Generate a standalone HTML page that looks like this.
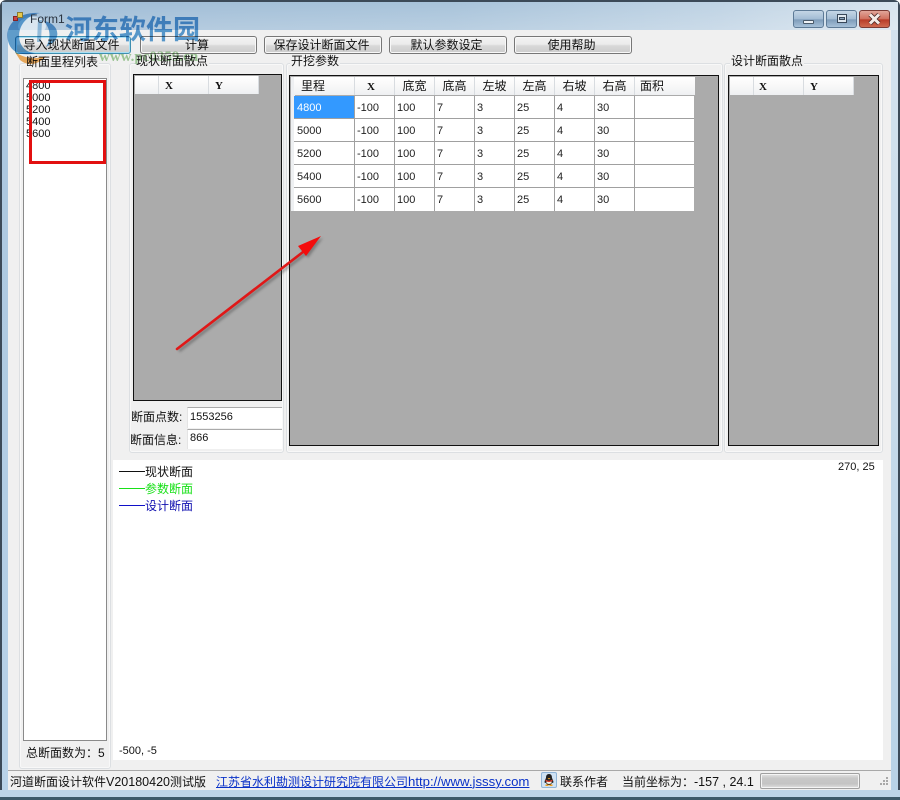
<!DOCTYPE html>
<html>
<head>
<meta charset="utf-8">
<style>
html,body{margin:0;padding:0;width:900px;height:800px;overflow:hidden;background:#fff}
*{box-sizing:border-box}
body{position:relative;font-family:"Liberation Sans","WenQuanYi Zen Hei","Noto Sans CJK SC",sans-serif;font-size:12px;color:#111}
.a{position:absolute}
.t{position:absolute;white-space:nowrap;line-height:14px}
.btn{position:absolute;top:36px;height:18px;border:1px solid #777;border-radius:3px;background:linear-gradient(#f3f3f3 0,#ebebeb 45%,#d8d8d8 55%,#cdcdcd 100%);text-align:center;line-height:16px;font-size:12px;box-shadow:inset 0 0 0 1px #f8f8f8;padding-right:3px}
.grp{position:absolute;border:1px solid #dcdfe2;border-radius:3px;background:#f0f0f0;box-shadow:inset 0 0 0 1px #f8f8f8}
.lbl{position:absolute;background:#f0f0f0;line-height:14px;white-space:nowrap;padding:0 1px;font-size:12px}
.grid{position:absolute;background:#ababab;border:1px solid #111}
.hc{position:absolute;top:1px;height:18px;background:linear-gradient(#fff,#f8f8f8 50%,#eef0f2);border-right:1px solid #d8dce0;text-align:center;line-height:19px;font-size:12px}
.m{font-family:"Liberation Serif",serif;font-weight:bold;font-size:11px;line-height:20px;text-align:left}
.c{position:absolute;background:#fff;border-right:1px solid #a0a0a0;border-bottom:1px solid #a0a0a0;height:23px;line-height:24px;font-size:11px;padding-left:2px;color:#222}
.wm{position:absolute;white-space:nowrap;mix-blend-mode:multiply}
</style>
</head>
<body>
<!-- window frame -->
<div class="a" style="left:0;top:0;width:900px;height:800px;border:2px solid #3c4a58;border-radius:6px 6px 0 0;background:linear-gradient(180deg,#9dbbd6 0,#b4cde2 30px,#b9d2e6 100%)"></div>
<div class="a" style="left:2px;top:2px;width:896px;height:28px;background:linear-gradient(rgba(255,255,255,0),rgba(255,255,255,.2)),linear-gradient(90deg,#9fbcd6 0,#a8c3da 50%,#bfd3e4 80%,#d8e4ee 100%)"></div>
<div class="a" style="left:8px;top:30px;width:883px;height:760px;background:#f0f0f0"></div>
<div class="a" style="left:0;top:790px;width:900px;height:10px;background:#bcd5e8;border-bottom:3px solid #3c5a6a"></div>
<div class="a" style="left:0;top:30px;width:8px;height:760px;background:linear-gradient(#aac6de,#b8d2e8);border-left:2px solid #3c4a58"></div>
<div class="a" style="left:891px;top:30px;width:9px;height:760px;background:linear-gradient(#d4e2ee,#b8d2e6);border-right:2px solid #3c4a58"></div>

<!-- watermark logo pale base -->
<svg class="a" style="left:0;top:0" width="80" height="40"><ellipse cx="32" cy="26" rx="14" ry="9" fill="#e8f0f6" opacity=".75"/></svg>

<!-- caption buttons -->
<div class="a" style="left:793px;top:10px;width:31px;height:18px;border:1px solid #5d7a96;border-radius:3px;background:linear-gradient(#c4d6e6,#a3bcd4 50%,#7e9cba 55%,#a6c0d8)"><div class="a" style="left:9px;top:9px;width:11px;height:4px;background:#eef2f6;border:1px solid #4a5a6a;border-radius:1px"></div></div>
<div class="a" style="left:826px;top:10px;width:31px;height:18px;border:1px solid #5d7a96;border-radius:3px;background:linear-gradient(#c4d6e6,#a3bcd4 50%,#7e9cba 55%,#a6c0d8)"><div class="a" style="left:10px;top:3px;width:10px;height:9px;background:#dfe8f0;border:1px solid #38485a"></div><div class="a" style="left:12px;top:6px;width:6px;height:3px;background:#8aa4bc;border:1px solid #38485a"></div></div>
<div class="a" style="left:859px;top:10px;width:31px;height:18px;border:1px solid #7a3a34;border-radius:3px;background:linear-gradient(#e2a69a,#d0705e 50%,#b83c28 55%,#cf6a50)">
<svg class="a" style="left:0;top:0" width="29" height="16"><path d="M10 3.5L19 12.5M19 3.5L10 12.5" stroke="#4a2a28" stroke-width="4.5"/><path d="M10 3.5L19 12.5M19 3.5L10 12.5" stroke="#f4ece8" stroke-width="3"/></svg></div>

<!-- toolbar buttons -->
<div class="btn" style="left:15px;width:116px;border-color:#3f8fb0;box-shadow:inset 0 0 0 1px #a8e0f4">导入现状断面文件</div>
<div class="btn" style="left:140px;width:117px">计算</div>
<div class="btn" style="left:264px;width:118px">保存设计断面文件</div>
<div class="btn" style="left:389px;width:118px">默认参数设定</div>
<div class="btn" style="left:514px;width:118px">使用帮助</div>

<!-- group 1 -->
<div class="grp" style="left:19px;top:63px;width:92px;height:706px"></div>
<div class="lbl" style="left:25px;top:55px">断面里程列表</div>
<div class="a" style="left:23px;top:78px;width:84px;height:663px;background:#fff;border:1px solid #8a8a8a"></div>
<div class="t" style="left:26px;top:80px;font-size:11px;line-height:12px">4800<br>5000<br>5200<br>5400<br>5600</div>
<div class="a" style="left:29px;top:80px;width:77px;height:84px;border:3px solid #e21010"></div>
<div class="t" style="left:26px;top:746px">总断面数为：5</div>

<!-- group 2 -->
<div class="grp" style="left:129px;top:63px;width:155px;height:390px"></div>
<div class="lbl" style="left:135px;top:54px">现状断面散点</div>
<div class="grid" style="left:133px;top:74px;width:149px;height:327px">
  <div class="hc" style="left:1px;width:24px"></div>
  <div class="hc m" style="left:25px;width:50px;padding-left:6px">X</div>
  <div class="hc m" style="left:75px;width:50px;padding-left:6px">Y</div>
</div>
<div class="t" style="left:131px;top:410px">断面点数:</div>
<div class="a" style="left:187px;top:407px;width:95px;height:21px;background:#fff;border-top:1px solid #aaa;border-left:1px solid #e4e4e4;font-size:11px;line-height:18px;padding-left:2px">1553256</div>
<div class="t" style="left:130px;top:433px">断面信息:</div>
<div class="a" style="left:187px;top:429px;width:95px;height:20px;background:#fff;border-top:1px solid #aaa;border-left:1px solid #e4e4e4;font-size:11px;line-height:17px;padding-left:2px">866</div>

<!-- group 3 -->
<div class="grp" style="left:286px;top:63px;width:437px;height:390px"></div>
<div class="lbl" style="left:290px;top:54px">开挖参数</div>
<div class="grid" style="left:289px;top:75px;width:430px;height:371px">
  <div class="a" style="left:1px;top:1px;width:4px;height:134px;background:#eef0f2"></div>
  <div class="hc" style="left:4px;width:61px;text-align:left;padding-left:7px">里程</div>
  <div class="hc m" style="left:65px;width:40px;padding-left:12px">X</div>
  <div class="hc" style="left:105px;width:40px">底宽</div>
  <div class="hc" style="left:145px;width:40px">底高</div>
  <div class="hc" style="left:185px;width:40px">左坡</div>
  <div class="hc" style="left:225px;width:40px">左高</div>
  <div class="hc" style="left:265px;width:40px">右坡</div>
  <div class="hc" style="left:305px;width:40px">右高</div>
  <div class="hc" style="left:345px;width:60px;border-right:0;text-align:left;padding-left:5px">面积</div>

  <div class="c" style="left:4px;top:20px;width:61px;background:#3399ff;color:#fff;padding-left:3px">4800</div><div class="c" style="left:65px;top:20px;width:40px">-100</div><div class="c" style="left:105px;top:20px;width:40px">100</div><div class="c" style="left:145px;top:20px;width:40px">7</div><div class="c" style="left:185px;top:20px;width:40px">3</div><div class="c" style="left:225px;top:20px;width:40px">25</div><div class="c" style="left:265px;top:20px;width:40px">4</div><div class="c" style="left:305px;top:20px;width:40px">30</div><div class="c" style="left:345px;top:20px;width:59px;border-right:0"></div>

  <div class="c" style="left:4px;top:43px;width:61px;padding-left:3px">5000</div><div class="c" style="left:65px;top:43px;width:40px">-100</div><div class="c" style="left:105px;top:43px;width:40px">100</div><div class="c" style="left:145px;top:43px;width:40px">7</div><div class="c" style="left:185px;top:43px;width:40px">3</div><div class="c" style="left:225px;top:43px;width:40px">25</div><div class="c" style="left:265px;top:43px;width:40px">4</div><div class="c" style="left:305px;top:43px;width:40px">30</div><div class="c" style="left:345px;top:43px;width:59px;border-right:0"></div>

  <div class="c" style="left:4px;top:66px;width:61px;padding-left:3px">5200</div><div class="c" style="left:65px;top:66px;width:40px">-100</div><div class="c" style="left:105px;top:66px;width:40px">100</div><div class="c" style="left:145px;top:66px;width:40px">7</div><div class="c" style="left:185px;top:66px;width:40px">3</div><div class="c" style="left:225px;top:66px;width:40px">25</div><div class="c" style="left:265px;top:66px;width:40px">4</div><div class="c" style="left:305px;top:66px;width:40px">30</div><div class="c" style="left:345px;top:66px;width:59px;border-right:0"></div>

  <div class="c" style="left:4px;top:89px;width:61px;padding-left:3px">5400</div><div class="c" style="left:65px;top:89px;width:40px">-100</div><div class="c" style="left:105px;top:89px;width:40px">100</div><div class="c" style="left:145px;top:89px;width:40px">7</div><div class="c" style="left:185px;top:89px;width:40px">3</div><div class="c" style="left:225px;top:89px;width:40px">25</div><div class="c" style="left:265px;top:89px;width:40px">4</div><div class="c" style="left:305px;top:89px;width:40px">30</div><div class="c" style="left:345px;top:89px;width:59px;border-right:0"></div>

  <div class="c" style="left:4px;top:112px;width:61px;padding-left:3px;border-bottom:0">5600</div><div class="c" style="left:65px;top:112px;width:40px;border-bottom:0">-100</div><div class="c" style="left:105px;top:112px;width:40px;border-bottom:0">100</div><div class="c" style="left:145px;top:112px;width:40px;border-bottom:0">7</div><div class="c" style="left:185px;top:112px;width:40px;border-bottom:0">3</div><div class="c" style="left:225px;top:112px;width:40px;border-bottom:0">25</div><div class="c" style="left:265px;top:112px;width:40px;border-bottom:0">4</div><div class="c" style="left:305px;top:112px;width:40px;border-bottom:0">30</div><div class="c" style="left:345px;top:112px;width:59px;border:0"></div>
</div>

<!-- group 4 -->
<div class="grp" style="left:724px;top:63px;width:159px;height:390px"></div>
<div class="lbl" style="left:730px;top:54px">设计断面散点</div>
<div class="grid" style="left:728px;top:75px;width:151px;height:371px">
  <div class="hc" style="left:1px;width:24px"></div>
  <div class="hc m" style="left:25px;width:50px;padding-left:5px">X</div>
  <div class="hc m" style="left:75px;width:50px;padding-left:6px">Y</div>
</div>

<!-- plot -->
<div class="a" style="left:113px;top:460px;width:770px;height:300px;background:#fff"></div>
<div class="a" style="left:119px;top:471px;width:26px;height:1px;background:#111"></div>
<div class="t" style="left:145px;top:465px;color:#111">现状断面</div>
<div class="a" style="left:119px;top:488px;width:26px;height:1px;background:#18e018"></div>
<div class="t" style="left:145px;top:482px;color:#18e018">参数断面</div>
<div class="a" style="left:119px;top:505px;width:26px;height:1px;background:#1010c8"></div>
<div class="t" style="left:145px;top:499px;color:#1010b0">设计断面</div>
<div class="t" style="left:838px;top:460px;font-size:11px">270, 25</div>
<div class="t" style="left:119px;top:744px;font-size:11px">-500, -5</div>

<!-- status bar -->
<div class="a" style="left:8px;top:770px;width:883px;height:1px;background:#a8a8a8"></div>
<div class="t" style="left:10px;top:775px;font-size:12px">河道断面设计软件<span style="font-size:12.5px">V20180420</span>测试版</div>
<div class="t" style="left:216px;top:775px;font-size:12px;color:#0a32c8;text-decoration:underline">江苏省水利勘测设计研究院有限公司<span style="font-size:13.2px">http://www.jsssy.com</span></div>
<div class="a" style="left:541px;top:772px;width:16px;height:16px;background:#cfe2f4;border:1px solid #8fb4d8;border-radius:2px"></div>
<svg class="a" style="left:542px;top:773px" width="14" height="14"><path d="M7 1C4.500 1 4 3 4 5C3 7 2 9 3 10C4 10 4 9.500 4 9.500C4.500 11 5 12 7 12C9 12 9.500 11 10 9.500C10 9.500 10 10 11 10C12 9 11 7 10 5C10 3 9.500 1 7 1Z" fill="#222"/><path d="M4.500 7Q7 9 9.500 7L9.500 10Q7 12 4.500 10Z" fill="#f0f0e8"/><path d="M3.500 6.500Q7 9 10.500 6.500L10.500 8Q7 10 3.500 8Z" fill="#d83020"/><path d="M5.500 5H8.500L7 6.500Z" fill="#f0a020"/><path d="M3.500 11.500H6.500V13H3.500ZM7.500 11.500H10.500V13H7.500Z" fill="#f0a020"/></svg>
<div class="t" style="left:560px;top:775px">联系作者</div>
<div class="t" style="left:622px;top:775px;font-size:12px">当前坐标为：<span style="font-size:12.5px">-157 , 24.1</span></div>
<div class="a" style="left:760px;top:773px;width:100px;height:16px;border:1px solid #a0a0a0;border-radius:2px;background:linear-gradient(#e4e4e4,#c8c8c8 30%,#c4c4c4 70%,#e0e0e0);box-shadow:inset 0 0 0 1px #f4f4f4"></div>
<svg class="a" style="left:876px;top:775px" width="14" height="14"><g fill="#a8a8a8"><rect x="10" y="2" width="2" height="2"/><rect x="7" y="5" width="2" height="2"/><rect x="10" y="5" width="2" height="2"/><rect x="4" y="8" width="2" height="2"/><rect x="7" y="8" width="2" height="2"/><rect x="10" y="8" width="2" height="2"/></g></svg>

<!-- red arrow -->
<svg class="a" style="left:0;top:0" width="900" height="800">
<defs><filter id="b" x="-20%" y="-20%" width="140%" height="140%"><feGaussianBlur stdDeviation="1.200"/></filter></defs>
<g filter="url(#b)" opacity=".45" transform="translate(2,2)"><path d="M177 349L303 252" stroke="#444" stroke-width="3"/><path d="M321 236L298 246L306 256Z" fill="#444"/></g>
<path d="M177 349L303 252" stroke="#e01818" stroke-width="2.600" stroke-linecap="round"/>
<path d="M321 236L298 246L306 256Z" fill="#f40c0c"/>
</svg>

<!-- watermark -->
<svg class="a" style="left:0;top:0;mix-blend-mode:multiply;opacity:.85" width="80" height="72">
<path d="M9 44C2 26 18 11 40 13C26 15 16 28 20 42C23 50 29 53 36 53C24 56 13 54 9 44Z" fill="#4a96d0"/>
<path d="M38 20L42 20L41 42L37 42Z" fill="#8fbee0"/>
<path d="M44 21C56 23 62 34 53 43L46 47C51 38 51 30 44 21Z" fill="#4a96d0"/>
<path d="M15 52C24 58 34 60 46 56C40 63 30 68 20 60Z" fill="#f2a344"/>
</svg>
<div class="wm" style="left:65px;top:10px;font-size:27px;font-weight:bold;line-height:36px;color:#5a9fd6;font-family:'Noto Sans CJK SC','Liberation Sans',sans-serif">河东软件园</div>
<div class="wm" style="left:99px;top:47px;font-size:15px;font-weight:bold;line-height:20px;color:#a4d09c;font-family:'Liberation Serif',serif">www.pc0359.cn</div>

<!-- title text above logo -->
<div class="a" style="left:13px;top:16px;width:5px;height:5px;background:#c44;border:1px solid #822"></div>
<div class="a" style="left:17px;top:12px;width:6px;height:6px;background:#e8c84a;border:1px solid #8a7a30"></div>
<div class="t" style="left:30px;top:12px;color:#2a3440;font-size:12px">Form1</div>
</body>
</html>
